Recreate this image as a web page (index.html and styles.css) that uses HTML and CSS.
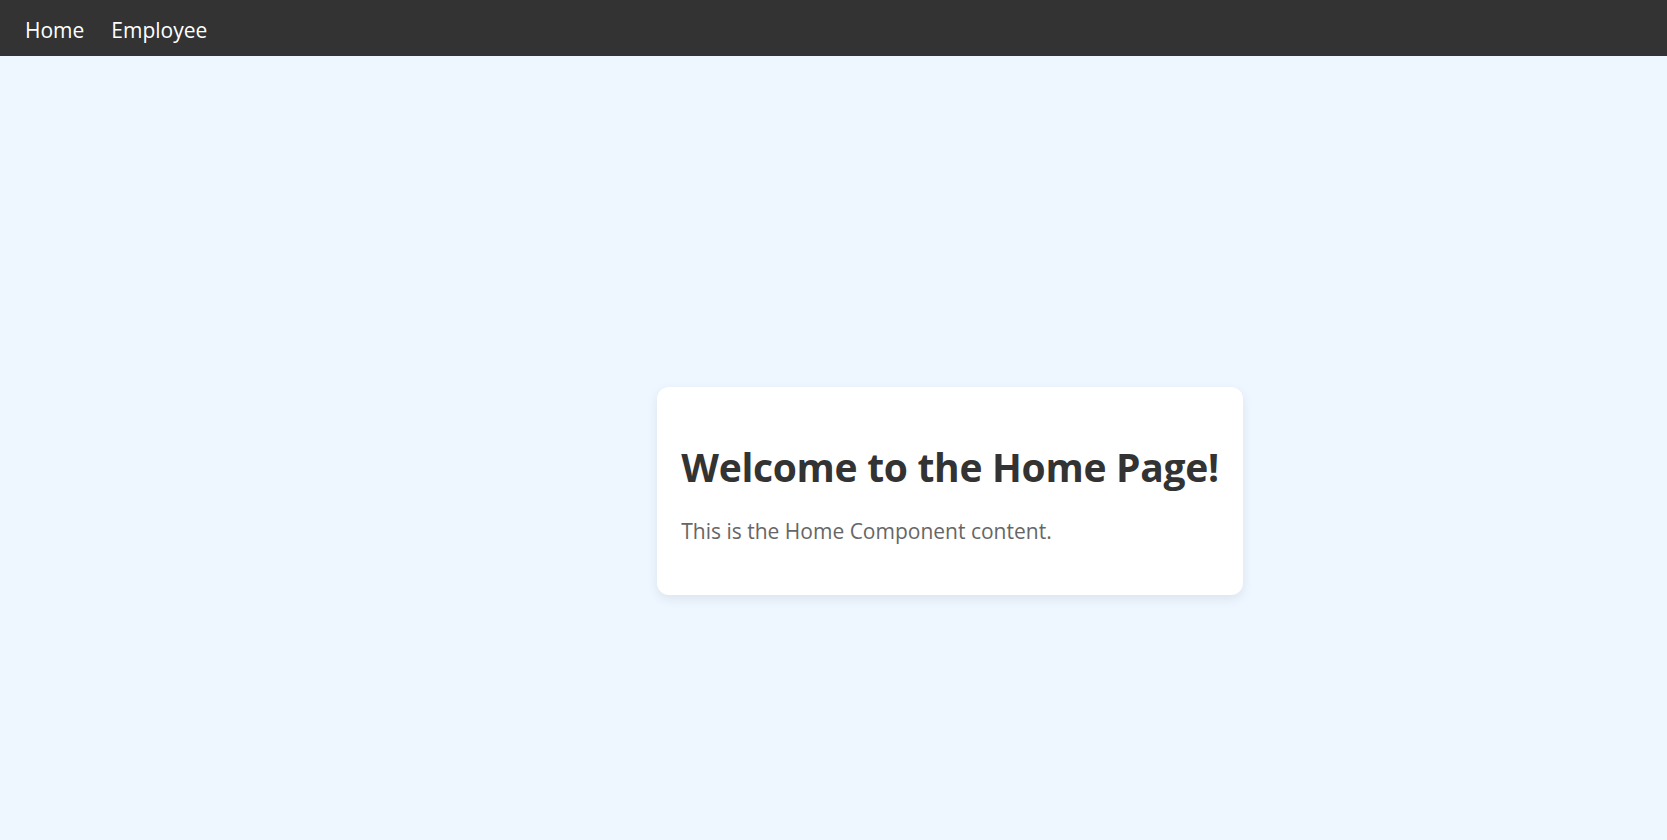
FILE: index.html
```html
<!DOCTYPE html>
<html lang="en">
<head>
<meta charset="utf-8">
<title>Home</title>
<link rel="stylesheet" href="styles.css">
</head>
<body>
<nav class="topnav">
  <a class="nav-link" href="#">Home</a>
  <a class="nav-link" href="#">Employee</a>
</nav>
<main class="content">
  <section class="card">
    <h1 class="card-title">Welcome to the Home Page!</h1>
    <p class="card-text">This is the Home Component content.</p>
  </section>
</main>
</body>
</html>
```
FILE: styles.css
```css
html, body {
  margin: 0;
  padding: 0;
}
body {
  font-family: "Open Sans", "Noto Sans", sans-serif;
  background: #eef6ff;
  min-height: 840px;
  display: flex;
  flex-direction: column;
}
.topnav {
  background: #333333;
  height: 56px;
  display: flex;
  align-items: center;
  gap: 27px;
  padding: 4px 25px 0;
  box-sizing: border-box;
}
.nav-link {
  color: #ffffff;
  text-decoration: none;
  font-size: 21px;
  line-height: 26px;
}
.content {
  flex: 1;
  display: flex;
  justify-content: center;
  align-items: center;
  padding: 85px 0 0 233px;
}
.card {
  background: #ffffff;
  border-radius: 12px;
  box-shadow: 0 4px 12px rgba(0, 0, 0, 0.08);
  padding: 24px;
}
.card-title {
  margin: 29px 0 25px;
  font-size: 39px;
  letter-spacing: -0.3px;
  line-height: 53px;
  font-weight: 700;
  color: #333333;
}
.card-text {
  margin: 0 0 27px;
  font-size: 21px;
  line-height: 26px;
  color: #666666;
}
```
